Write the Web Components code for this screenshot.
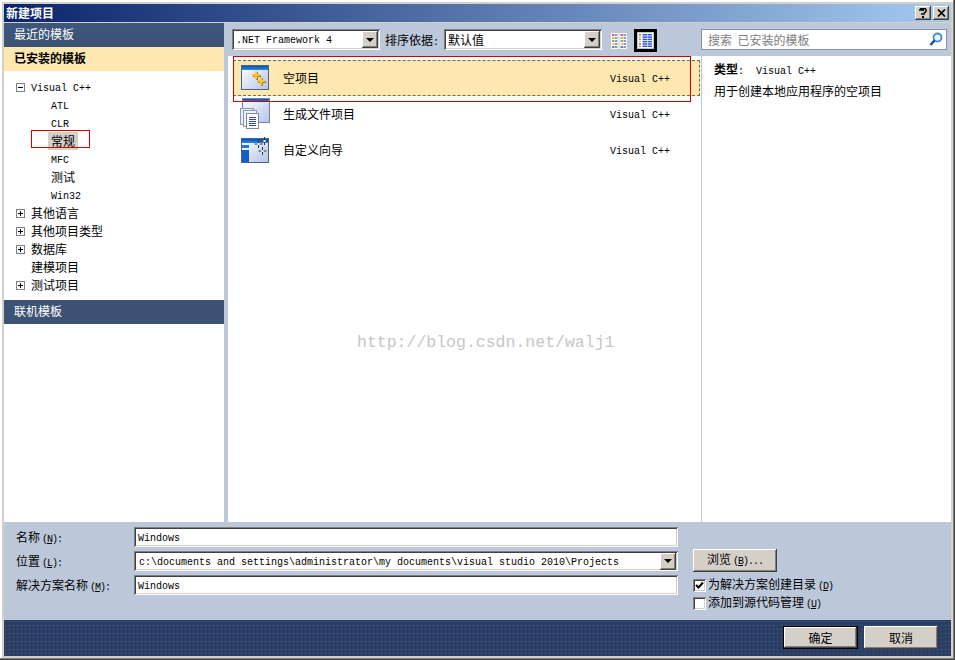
<!DOCTYPE html>
<html lang="zh">
<head>
<meta charset="utf-8">
<title>新建项目</title>
<style>
  html, body { margin: 0; width: 955px; height: 660px; overflow: hidden; }
  body { font: 12px/18px "Noto Sans CJK SC", "Liberation Sans", sans-serif; color: #000; }
</style>
</head>
<body>

<win-dialog>
  <span slot="title">新建项目</span>

  <nav-panel slot="nav">
    <nav-head>最近的模板</nav-head>
    <nav-head active>已安装的模板</nav-head>
    <tree-list>
      <tree-item state="open"><en-t>Visual C++</en-t></tree-item>
      <tree-item child><en-t>ATL</en-t></tree-item>
      <tree-item child><en-t>CLR</en-t></tree-item>
      <tree-item child selected>常规</tree-item>
      <tree-item child><en-t>MFC</en-t></tree-item>
      <tree-item child>测试</tree-item>
      <tree-item child><en-t>Win32</en-t></tree-item>
      <tree-item state="closed">其他语言</tree-item>
      <tree-item state="closed">其他项目类型</tree-item>
      <tree-item state="closed">数据库</tree-item>
      <tree-item state="leaf">建模项目</tree-item>
      <tree-item state="closed">测试项目</tree-item>
    </tree-list>
    <nav-head flat>联机模板</nav-head>
  </nav-panel>

  <tool-bar slot="toolbar">
    <combo-box style="width:148px"><en-t>.NET Framework 4</en-t></combo-box>
    <span class="sort">排序依据<en-t>:</en-t></span>
    <combo-box style="width:158px">默认值</combo-box>
    <view-toggle kind="large"></view-toggle>
    <view-toggle kind="small" selected></view-toggle>
    <search-box>搜索&nbsp;&nbsp;已安装的模板</search-box>
  </tool-bar>

  <template-list slot="list">
    <template-row selected>
      <svg slot="icon" width="30" height="32" viewBox="0 0 30 32">
        <defs>
          <linearGradient id="pane" x1="0" y1="0" x2="1" y2="1">
            <stop offset="0" stop-color="#ffffff"/><stop offset="1" stop-color="#b4c4e4"/>
          </linearGradient>
          <linearGradient id="bar" x1="0" y1="0" x2="0" y2="1">
            <stop offset="0" stop-color="#0a4fb0"/><stop offset="1" stop-color="#2a8ae8"/>
          </linearGradient>
        </defs>
        <rect x="1.500" y="3.500" width="27" height="24" fill="url(#pane)" stroke="#4a6488"/>
        <rect x="2" y="4" width="26" height="4" fill="url(#bar)"/>
        <path d="M17 10v8M13 14h8M22 16v8M18 20h8" stroke="#a88028" stroke-width="2"/>
        <path d="M16 9v8M12 13h8M21 15v8M17 19h8" stroke="#f6c832" stroke-width="2"/>
      </svg>
      <span>空项目</span>
      <en-t slot="kind">Visual C++</en-t>
    </template-row>
    <template-row>
      <svg slot="icon" width="30" height="32" viewBox="0 0 30 32">
        <rect x="2.500" y="0.500" width="27" height="24" fill="url(#pane)" stroke="#6a84a8"/>
        <rect x="3" y="1" width="26" height="3" fill="url(#bar)"/>
        <rect x="0.500" y="10.500" width="13" height="16" fill="#e8ecf4" stroke="#8a9ab4"/>
        <rect x="3.500" y="12.500" width="13" height="16" fill="#f0f2f8" stroke="#8a9ab4"/>
        <rect x="6.500" y="15.500" width="12" height="15" fill="#fff" stroke="#7a8aa8"/>
        <path d="M9 19.500h7M9 21.500h7M9 23.500h7M9 25.500h7M9 27.500h7" stroke="#2a4ca8"/>
      </svg>
      <span>生成文件项目</span>
      <en-t slot="kind">Visual C++</en-t>
    </template-row>
    <template-row>
      <svg slot="icon" width="30" height="32" viewBox="0 0 30 32">
        <rect x="1.500" y="4.500" width="27" height="24" fill="url(#pane)" stroke="#4a6488"/>
        <rect x="2" y="5" width="26" height="4" fill="url(#bar)"/>
        <rect x="2" y="11" width="7" height="3" fill="#1e7ad8"/>
        <rect x="2" y="16" width="7" height="12" fill="#1060c8"/>
        <path d="M24.500 3v8M20.500 7h8M18.500 6v8M14.500 10h8M22.500 13v8M18.500 17h8" stroke="#30383f" stroke-width="1"/>
        <path d="M23.500 6h2v2h-2zM17.500 9h2v2h-2zM21.500 16h2v2h-2z" fill="#fff"/>
      </svg>
      <span>自定义向导</span>
      <en-t slot="kind">Visual C++</en-t>
    </template-row>
    <water-mark>http://blog.csdn.net/walj1</water-mark>
  </template-list>

  <detail-pane slot="detail">
    <div><b>类型</b><en-t>:&nbsp;&nbsp;Visual C++</en-t></div>
    <div>用于创建本地应用程序的空项目</div>
  </detail-pane>

  <project-form slot="form">
    <span slot="l1">名称<en-t gap>(<u>N</u>):</en-t></span>
    <text-field slot="f1"><en-t>Windows</en-t></text-field>
    <span slot="l2">位置<en-t gap>(<u>L</u>):</en-t></span>
    <combo-box slot="f2" style="width:544px;height:20px;padding-left:5px"><en-t>c:\documents and settings\administrator\my documents\visual studio 2010\Projects</en-t></combo-box>
    <span slot="l3">解决方案名称<en-t gap>(<u>M</u>):</en-t></span>
    <text-field slot="f3"><en-t>Windows</en-t></text-field>
    <win-button slot="browse" style="width:84px;height:23px">浏览<en-t gap>(<u>B</u>)...</en-t></win-button>
    <check-field slot="c1" checked>为解决方案创建目录<en-t gap>(<u>D</u>)</en-t></check-field>
    <check-field slot="c2">添加到源代码管理<en-t gap>(<u>U</u>)</en-t></check-field>
  </project-form>

  <win-button slot="ok" default style="width:75px;height:23px">确定</win-button>
  <win-button slot="cancel" style="width:74px;height:23px">取消</win-button>

  <red-mark slot="marks" x="31" y="130" w="59" h="18"></red-mark>
  <red-mark slot="marks" x="233" y="56" w="458" h="46"></red-mark>
</win-dialog>

<script>
  const BEVEL_UP = 'inset -1px -1px #404040, inset 1px 1px #fff, inset -2px -2px #808080, inset 2px 2px #d4d0c8'
  const BEVEL_DOWN = 'inset 1px 1px #808080, inset -1px -1px #fff, inset 2px 2px #404040, inset -2px -2px #d4d0c8'

  // small helper, every element here is just a shadow root with fixed markup
  function define (name, html, setup) {
    customElements.define(name, class extends HTMLElement {
      constructor () {
        super()
        this.attachShadow({ mode: 'open' }).innerHTML = html
      }

      connectedCallback () {
        if (setup) setup.call(this)
      }
    })
  }

  // latin runs are half the width of the hanzi, like the bitmap font of the dialog
  // (no whitespace around the slot: this one is inline and a space would show)
  define('en-t', `<style>
      :host { font: 10px/18px "Liberation Mono", monospace; }
      :host([gap]) { margin-left: 2px; letter-spacing: -1px; }
    </style><slot></slot>`)

  define('win-dialog', `
    <style>
      :host {
        display: flex; flex-direction: column; position: relative; box-sizing: border-box;
        width: 955px; height: 660px; padding: 4px; background: #d4d0c8;
        box-shadow: inset -1px -1px #404040, inset -2px -2px #808080, inset 2px 2px #fff, inset 1px 1px #d4d0c8;
      }
      .title {
        display: flex; align-items: center; justify-content: space-between; flex: none;
        height: 18px; margin-bottom: 1px; padding: 0 2px; color: #fff; font-weight: bold;
        background: linear-gradient(90deg, #0a246a, #a6caf0);
      }
      .caps { display: flex; gap: 2px; }
      .cap {
        box-sizing: border-box; width: 16px; height: 14px; background: #d4d0c8; box-shadow: ${BEVEL_UP};
        display: flex; align-items: center; justify-content: center;
      }
      .top { display: flex; flex: none; height: 499px; background: #bcc8d9; }
      .main { display: flex; flex-direction: column; width: 723px; margin-left: 4px; }
      .panes { display: flex; flex: 1; min-height: 0; }
      .footer {
        display: flex; justify-content: flex-end; align-items: flex-start; gap: 6px; flex: none;
        height: 36px; box-sizing: border-box; padding: 6px 13px 0 0;
        background-color: #2a3c62;
        background-image: radial-gradient(circle at 1.5px 1.5px, #33486f 1px, transparent 1.2px);
        background-size: 4px 4px;
      }
    </style>
    <div class="title">
      <slot name="title"></slot>
      <div class="caps">
        <div class="cap"><svg width="8" height="10" viewBox="0 0 8 10"><path d="M1 3V1.500L2 .5h4l1 1v2L5 5v2M3 3V2h2M3 5v2" fill="none" stroke="#000" stroke-width="1.500"/><rect x="3" y="8" width="2" height="2"/></svg></div>
        <div class="cap"><svg width="9" height="8" viewBox="0 0 9 8"><path d="M1 .5l7 7M8 .5l-7 7" stroke="#000" stroke-width="1.700"/></svg></div>
      </div>
    </div>
    <div class="top">
      <slot name="nav"></slot>
      <div class="main">
        <slot name="toolbar"></slot>
        <div class="panes">
          <slot name="list"></slot>
          <slot name="detail"></slot>
        </div>
      </div>
    </div>
    <slot name="form"></slot>
    <div class="footer"><slot name="ok"></slot><slot name="cancel"></slot></div>
    <slot name="marks"></slot>
  `)

  define('nav-panel', `
    <style>:host { display: flex; flex-direction: column; flex: none; width: 220px; background: #fff; }</style>
    <slot></slot>
  `)

  define('nav-head', `
    <style>
      :host {
        display: block; height: 24px; padding-left: 10px; line-height: 22px; color: #fff;
        background: linear-gradient(180deg, #3d577d, #3d5275);
      }
      :host([active]) { background: #ffe8b0; color: #000; font-weight: bold; }
      :host([flat]) { background: #3d5275; margin-top: 6px; }
    </style>
    <slot></slot>
  `)

  define('tree-list', `
    <style>:host { display: block; padding-top: 7px; }</style>
    <slot></slot>
  `)

  define('tree-item', `
    <style>
      :host { display: flex; align-items: center; height: 18px; padding-left: 12px; }
      :host([child]) { padding-left: 44px; }
      .box {
        position: relative; box-sizing: border-box; width: 9px; height: 9px; margin-right: 3px;
        border: 1px solid #808080; background: #fff;
      }
      .box::before { content: ""; position: absolute; left: 1px; top: 3px; width: 5px; height: 1px; background: #000; }
      .box.closed::after { content: ""; position: absolute; left: 3px; top: 1px; width: 1px; height: 5px; background: #000; }
      .box.leaf { visibility: hidden; }
      .label { padding: 0 3px; }
      :host([selected]) .label { background: #d4d0c8; }
    </style>
    <span class="box"></span><span class="label"><slot></slot></span>
  `, function () {
    const box = this.shadowRoot.querySelector('.box')
    const state = this.getAttribute('state')
    if (state) box.classList.add(state)
    else box.remove()
  })

  define('tool-bar', `
    <style>
      :host { display: flex; align-items: flex-start; flex: none; height: 33px; box-sizing: border-box; padding: 6px 0 0 4px; }
      ::slotted(.sort) { margin: 2px 5px 0 5px; }
    </style>
    <slot></slot>
  `)

  define('combo-box', `
    <style>
      :host {
        display: flex; align-items: center; justify-content: space-between; box-sizing: border-box;
        height: 21px; padding: 0 2px 0 4px; background: #fff; box-shadow: ${BEVEL_DOWN}; white-space: nowrap;
      }
      .drop {
        display: flex; align-items: center; justify-content: center; flex: none; box-sizing: border-box;
        width: 16px; height: 17px; background: #d4d0c8; box-shadow: ${BEVEL_UP};
      }
      .drop i { width: 0; height: 0; border: 4px solid transparent; border-top: 4px solid #000; border-bottom: 0; }
    </style>
    <span><slot></slot></span>
    <span class="drop"><i></i></span>
  `)

  define('view-toggle', `
    <style>
      :host { display: flex; align-items: center; justify-content: center; box-sizing: border-box; width: 16px; height: 23px; margin-left: 10px; }
      :host([selected]) { width: 23px; margin-left: 6px; border: 3px solid #000; }
    </style>
    <svg></svg>
  `, function () {
    const svg = this.shadowRoot.querySelector('svg')
    const dots = ['#e06050', '#e8b050', '#90b860', '#e0d060', '#6a80d0', '#e08060']
    let out = ''
    if (this.getAttribute('kind') === 'large') {
      svg.setAttribute('width', 16)
      svg.setAttribute('height', 16)
      svg.style.marginLeft = '-2px'
      out = '<rect width="7.500" height="16" fill="#fff"/><rect x="8.500" width="7.500" height="16" fill="#fff"/>'
      for (const col of [1, 9.500]) {
        dots.slice(0, 5).forEach((c, i) => {
          out += `<rect x="${col}" y="${1 + i * 3}" width="2.500" height="2" fill="${c}"/><rect x="${col + 3}" y="${1 + i * 3}" width="2.500" height="2" fill="#8c98c8"/>`
        })
      }
    } else {
      svg.setAttribute('width', 15)
      svg.setAttribute('height', 15)
      out = '<rect width="15" height="15" fill="#fff"/>'
      dots.forEach((c, i) => {
        const y = 1 + i * 2.300
        out += `<rect x="1" y="${y}" width="2" height="1.500" fill="${c}"/><rect x="4.500" y="${y}" width="4.500" height="1.500" fill="#3858c8"/><rect x="9.500" y="${y}" width="4.500" height="1.500" fill="#3858c8"/>`
      })
    }
    svg.innerHTML = out
  })

  define('search-box', `
    <style>
      :host {
        display: flex; align-items: center; justify-content: space-between; box-sizing: border-box;
        width: 246px; height: 21px; margin-left: 44px; padding: 0 3px 0 6px;
        background: #fff; border: 1px solid #8493ab; color: #808080; line-height: 19px;
      }
    </style>
    <span><slot></slot></span>
    <svg width="14" height="15" viewBox="0 0 14 15">
      <circle cx="8.500" cy="5.500" r="4" fill="#e8f2fc" stroke="#3f8ad8" stroke-width="1.800"/>
      <path d="M5.500 8.500L1.500 13" stroke="#1c4f9c" stroke-width="2.600"/>
    </svg>
  `)

  define('template-list', `
    <style>:host { display: block; position: relative; width: 473px; box-sizing: border-box; padding: 4px 1px 0 5px; background: #fff; }</style>
    <slot></slot>
  `)

  define('template-row', `
    <style>
      :host {
        display: grid; grid-template-columns: 43px 327px 1fr; align-items: center; box-sizing: border-box;
        height: 36px; padding-left: 7px;
      }
      :host([selected]) { background: #ffe8b0; outline: 1px dashed #806a40; outline-offset: -1px; }
      .icon { display: flex; height: 32px; }
    </style>
    <div class="icon"><slot name="icon"></slot></div>
    <div><slot></slot></div>
    <div><slot name="kind"></slot></div>
  `)

  define('water-mark', `
    <style>
      :host {
        position: absolute; left: 129px; top: 276px; white-space: nowrap;
        font: 16.500px/22px "Liberation Mono", monospace; color: #c6c6c6;
      }
    </style>
    <slot></slot>
  `)

  define('detail-pane', `
    <style>
      :host { display: flex; flex-direction: column; gap: 1px; flex: none; width: 249px; margin-left: 1px; box-sizing: border-box; padding: 4px 0 0 12px; background: #fff; }
    </style>
    <slot></slot>
  `)

  define('project-form', `
    <style>
      :host { display: flex; flex: none; height: 98px; box-sizing: border-box; padding: 5px 0 0 12px; background: #bcc8d9; }
      .grid { display: grid; grid-template-columns: 118px 544px; grid-auto-rows: 20px; row-gap: 4px; align-items: center; }
      .grid ::slotted(span) { margin-top: 2px; }
      .side { display: flex; flex-direction: column; margin-left: 15px; padding-top: 22px; }
      .side ::slotted(check-field) { height: 18px; }
      .side ::slotted(win-button) { margin-bottom: 4px; }
    </style>
    <div class="grid">
      <slot name="l1"></slot><slot name="f1"></slot>
      <slot name="l2"></slot><slot name="f2"></slot>
      <slot name="l3"></slot><slot name="f3"></slot>
    </div>
    <div class="side">
      <slot name="browse"></slot>
      <slot name="c1"></slot>
      <slot name="c2"></slot>
    </div>
  `)

  define('text-field', `
    <style>
      :host { display: flex; align-items: center; box-sizing: border-box; height: 20px; padding-left: 4px; background: #fff; box-shadow: ${BEVEL_DOWN}; }
    </style>
    <span><slot></slot></span>
  `)

  define('win-button', `
    <style>
      :host {
        display: flex; align-items: center; justify-content: center; box-sizing: border-box;
        background: #d4d0c8; box-shadow: ${BEVEL_UP};
      }
      :host([default]) { border: 1px solid #000; }
    </style>
    <span><slot></slot></span>
  `)

  define('check-field', `
    <style>
      :host { display: flex; align-items: center; gap: 2px; }
      .box { box-sizing: border-box; width: 13px; height: 13px; background: #fff; box-shadow: ${BEVEL_DOWN}; display: flex; align-items: center; justify-content: center; }
      svg { display: none; }
      :host([checked]) svg { display: block; }
    </style>
    <span class="box"><svg width="9" height="9" viewBox="0 0 9 9"><path d="M1 4l2.500 2.500L8 1.500" fill="none" stroke="#000" stroke-width="2"/></svg></span>
    <span><slot></slot></span>
  `)

  // the red rectangles somebody drew over the screenshot
  define('red-mark', `
    <style>:host { position: absolute; box-sizing: border-box; border: 1px solid #d00000; pointer-events: none; }</style>
  `, function () {
    this.style.left = this.getAttribute('x') + 'px'
    this.style.top = this.getAttribute('y') + 'px'
    this.style.width = this.getAttribute('w') + 'px'
    this.style.height = this.getAttribute('h') + 'px'
  })
</script>
</body>
</html>
